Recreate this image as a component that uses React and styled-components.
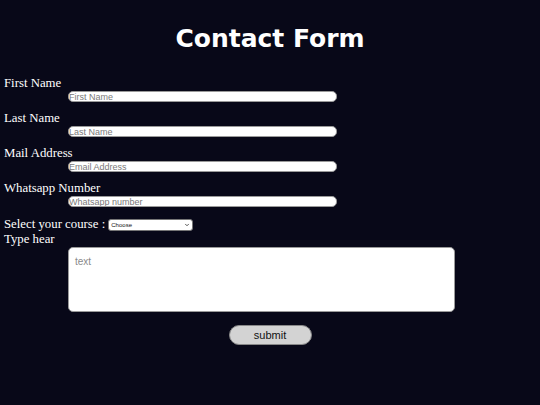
import styled, { createGlobalStyle } from 'styled-components';
import { ChevronDown } from 'lucide-react';

const GlobalStyle = createGlobalStyle`
    html, body {
        margin: 0;
        padding: 0;
        background-color: #080818;
    }
    body {
        min-height: 405px;
    }
`;

const Page = styled.div`
    padding: 0 4px;
    color: #fff;
`;

const Title = styled.h1`
    margin: 0;
    padding-top: 24px;
    height: 54px;
    box-sizing: border-box;
    text-align: center;
    font-family: "DejaVu Sans", Verdana, sans-serif;
    font-weight: bold;
    font-size: 25px;
    line-height: 30px;
    color: #fff;
`;

const Form = styled.form`
    display: block;
`;

const Label = styled.label`
    display: block;
    font-family: "Liberation Serif", "Times New Roman", serif;
    font-size: 12.8px;
    line-height: 15px;
    padding-top: 1px;
    margin-top: ${props => props.first ? '21px' : '8px'};
`;

const TextInput = styled.input`
    display: block;
    box-sizing: border-box;
    margin: 0 0 0 64px;
    width: 269px;
    height: 11px;
    padding: 0;
    border: 1px solid #9a9a9a;
    border-radius: 5px;
    background: #fff;
    font-family: "Liberation Sans", Arial, sans-serif;
    font-size: 9px;
    outline: none;
    &::placeholder {
        color: #7a7a7a;
    }
`;

const CourseRow = styled.div`
    display: flex;
    align-items: center;
    margin-top: 9px;
    height: 16px;
    font-family: "Liberation Serif", "Times New Roman", serif;
    font-size: 12.8px;
    line-height: 15px;
`;

const SelectWrap = styled.span`
    position: relative;
    display: block;
    margin: 2px 0 0 3px;
    height: 12px;
    svg {
        position: absolute;
        right: 3px;
        top: 3px;
        color: #222;
        pointer-events: none;
    }
`;

const Select = styled.select`
    display: block;
    box-sizing: border-box;
    appearance: none;
    width: 85px;
    height: 12px;
    min-height: 12px;
    margin: 0;
    padding: 0 2px;
    font-family: "Liberation Sans", Arial, sans-serif;
    font-size: 6px;
    line-height: 10px;
    color: #111;
    border: 1px solid #767676;
    border-radius: 3px;
    background: #fff;
    outline: none;
`;

const TypeLabel = styled.div`
    font-family: "Liberation Serif", "Times New Roman", serif;
    font-size: 12.8px;
    line-height: 15px;
`;

const TextArea = styled.textarea`
    display: block;
    box-sizing: border-box;
    margin: 0 0 0 64px;
    width: 387px;
    height: 65px;
    padding: 8px 6px;
    border: 1px solid #9a9a9a;
    border-radius: 5px;
    background: #fff;
    resize: none;
    font-family: "Liberation Sans", Arial, sans-serif;
    font-size: 10px;
    outline: none;
    &::placeholder {
        color: #8a8a8a;
    }
`;

const ButtonRow = styled.div`
    display: flex;
    justify-content: center;
    margin-top: 13px;
`;

const Submit = styled.button`
    width: 83px;
    height: 20px;
    padding: 0;
    border: 1px solid #888;
    border-radius: 10px;
    background-color: #d3d3d3;
    color: #111;
    font-family: "Liberation Sans", Arial, sans-serif;
    font-size: 11px;
`;

const fields = [
    { label: 'First Name', placeholder: 'First Name' },
    { label: 'Last Name', placeholder: 'Last Name' },
    { label: 'Mail Address', placeholder: 'Email Address' },
    { label: 'Whatsapp Number', placeholder: 'Whatsapp number' },
];

function App() {
    return (
        <>
            <GlobalStyle />
            <Page>
                <Title>Contact Form</Title>
                <Form onSubmit={e => e.preventDefault()}>
                    {fields.map((f, i) => (
                        <div key={f.label}>
                            <Label first={i === 0}>{f.label}</Label>
                            <TextInput type="text" placeholder={f.placeholder} />
                        </div>
                    ))}
                    <CourseRow>
                        Select your course :
                        <SelectWrap>
                            <Select defaultValue="choose">
                                <option value="choose">Choose</option>
                                <option value="html">HTML</option>
                                <option value="css">CSS</option>
                                <option value="js">JavaScript</option>
                            </Select>
                            <ChevronDown size={6} strokeWidth={3} />
                        </SelectWrap>
                    </CourseRow>
                    <TypeLabel>Type hear</TypeLabel>
                    <TextArea placeholder="text" />
                    <ButtonRow>
                        <Submit type="submit">submit</Submit>
                    </ButtonRow>
                </Form>
            </Page>
        </>
    );
}

export default App;
